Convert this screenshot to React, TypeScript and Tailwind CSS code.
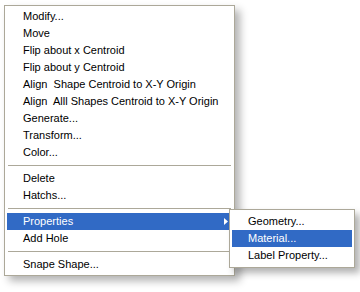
import React from "react";

type Entry = { label: string; sub?: boolean; active?: boolean } | "sep";

const mainItems: Entry[] = [
  { label: "Modify..." },
  { label: "Move" },
  { label: "Flip about x Centroid" },
  { label: "Flip about y Centroid" },
  { label: "Align  Shape Centroid to X-Y Origin" },
  { label: "Align  Alll Shapes Centroid to X-Y Origin" },
  { label: "Generate..." },
  { label: "Transform..." },
  { label: "Color..." },
  "sep",
  { label: "Delete" },
  { label: "Hatchs..." },
  "sep",
  { label: "Properties", sub: true, active: true },
  { label: "Add Hole" },
  "sep",
  { label: "Snape Shape..." },
];

const subItems = ["Geometry...", "Material...", "Label Property..."];

const Arrow = ({ white }: { white?: boolean }) => (
  <svg width="4" height="7" viewBox="0 0 4 7" className="absolute right-[4px] top-[5px]">
    <path d="M0 0 L4 3.5 L0 7 Z" fill={white ? "#ffffff" : "#000000"} />
  </svg>
);

const SubMenu = () => (
  <div className="absolute left-[222px] top-[-4px] w-[126px] bg-white border border-[#aca899] p-[2px] py-[3px] shadow-[5px_5px_7px_rgba(0,0,0,0.3)]">
    {subItems.map((s, i) => (
      <div
        key={s}
        className={`h-[17px] leading-[17px] pl-[16px] whitespace-nowrap ${
          i === 1 ? "bg-[#316ac5] text-white" : "text-black"
        }`}
      >
        {s}
      </div>
    ))}
  </div>
);

export default function App() {
  return (
    <div
      className="w-[360px] h-[292px] bg-white pt-[5px] pl-[4px] text-[11px]"
      style={{ fontFamily: '"Liberation Sans", Arial, sans-serif' }}
    >
      <div className="relative w-[231px] bg-white border border-[#aca899] p-[2px] shadow-[5px_5px_8px_rgba(0,0,0,0.3)]">
        {mainItems.map((it, i) =>
          it === "sep" ? (
            <div key={i} className="h-[9px] flex items-center px-[1px]">
              <div className="h-px w-full bg-[#aca899]" />
            </div>
          ) : (
            <div
              key={i}
              className={`relative h-[17px] leading-[17px] pl-[16px] whitespace-pre ${
                it.active ? "bg-[#316ac5] text-white" : "text-black"
              }`}
            >
              {it.label}
              {it.sub && <Arrow white={it.active} />}
              {it.sub && <SubMenu />}
            </div>
          )
        )}
      </div>
    </div>
  );
}
